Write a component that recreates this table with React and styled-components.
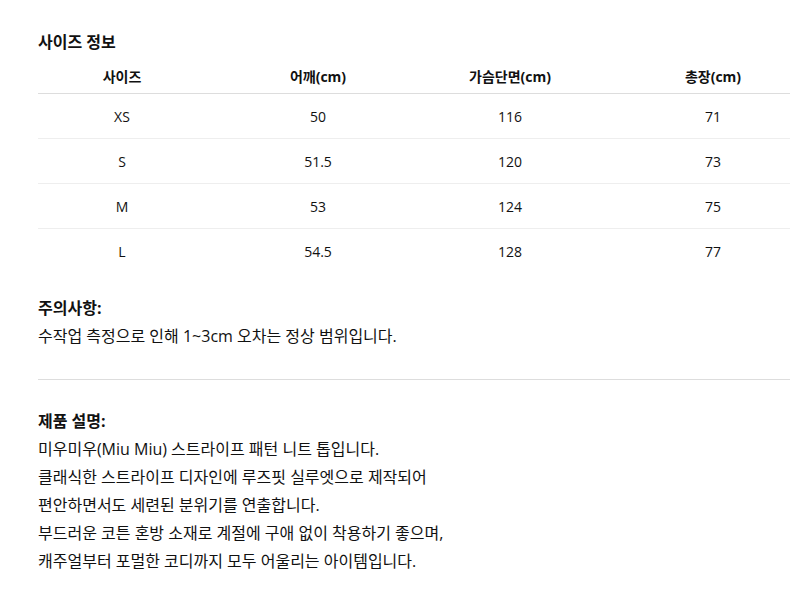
import styled, { createGlobalStyle } from 'styled-components';

const GlobalStyle = createGlobalStyle`
  body {
    margin: 0;
    background: #fff;
    color: #111;
    font-family: 'Open Sans', 'Noto Sans CJK KR', sans-serif;
  }
`;

const Page = styled.div`
  width: 752px;
  padding: 30px 0 0 38px;
`;

const Title = styled.h2`
  margin: 0;
  font-size: 16px;
  font-weight: 700;
  line-height: 24px;
`;

const Table = styled.div`
  display: grid;
  grid-template-columns: 168px 224px 160px 1fr;
  margin-top: 4px;
`;

const HeadCell = styled.div`
  height: 35px;
  display: flex;
  align-items: center;
  justify-content: center;
  font-size: 14px;
  font-weight: 700;
  border-bottom: 1px solid #ddd;

  &:nth-child(4) {
    padding-left: 46px;
  }
`;

const Cell = styled.div`
  height: 44px;
  display: flex;
  align-items: center;
  justify-content: center;
  font-size: 14px;
  border-bottom: ${(p) => (p.$last ? 'none' : '1px solid #eee')};
  padding-left: ${(p) => (p.$shift ? '46px' : '0')};
`;

const Section = styled.section`
  margin-top: ${(p) => p.$top || '0'};
`;

const Label = styled.div`
  font-size: 16px;
  font-weight: 700;
  line-height: 28px;
`;

const Text = styled.p`
  margin: 0;
  font-size: 16px;
  line-height: 28px;
`;

const Divider = styled.hr`
  border: none;
  border-top: 1px solid #ddd;
  margin: 29px 0 0;
`;

const headers = ['사이즈', '어깨(cm)', '가슴단면(cm)', '총장(cm)'];

const rows = [
  ['XS', '50', '116', '71'],
  ['S', '51.5', '120', '73'],
  ['M', '53', '124', '75'],
  ['L', '54.5', '128', '77'],
];

const description = [
  '미우미우(Miu Miu) 스트라이프 패턴 니트 톱입니다.',
  '클래식한 스트라이프 디자인에 루즈핏 실루엣으로 제작되어',
  '편안하면서도 세련된 분위기를 연출합니다.',
  '부드러운 코튼 혼방 소재로 계절에 구애 없이 착용하기 좋으며,',
  '캐주얼부터 포멀한 코디까지 모두 어울리는 아이템입니다.',
];

export default function App() {
  return (
    <Page>
      <GlobalStyle />
      <Title>사이즈 정보</Title>
      <Table>
        {headers.map((h) => (
          <HeadCell key={h}>{h}</HeadCell>
        ))}
        {rows.map((row, i) =>
          row.map((v, j) => (
            <Cell key={`${i}-${j}`} $last={i === rows.length - 1} $shift={j === 3}>
              {v}
            </Cell>
          ))
        )}
      </Table>

      <Section $top="21px">
        <Label>주의사항:</Label>
        <Text>수작업 측정으로 인해 1~3cm 오차는 정상 범위입니다.</Text>
      </Section>

      <Divider />

      <Section $top="27px">
        <Label>제품 설명:</Label>
        {description.map((line) => (
          <Text key={line}>{line}</Text>
        ))}
      </Section>
    </Page>
  );
}
